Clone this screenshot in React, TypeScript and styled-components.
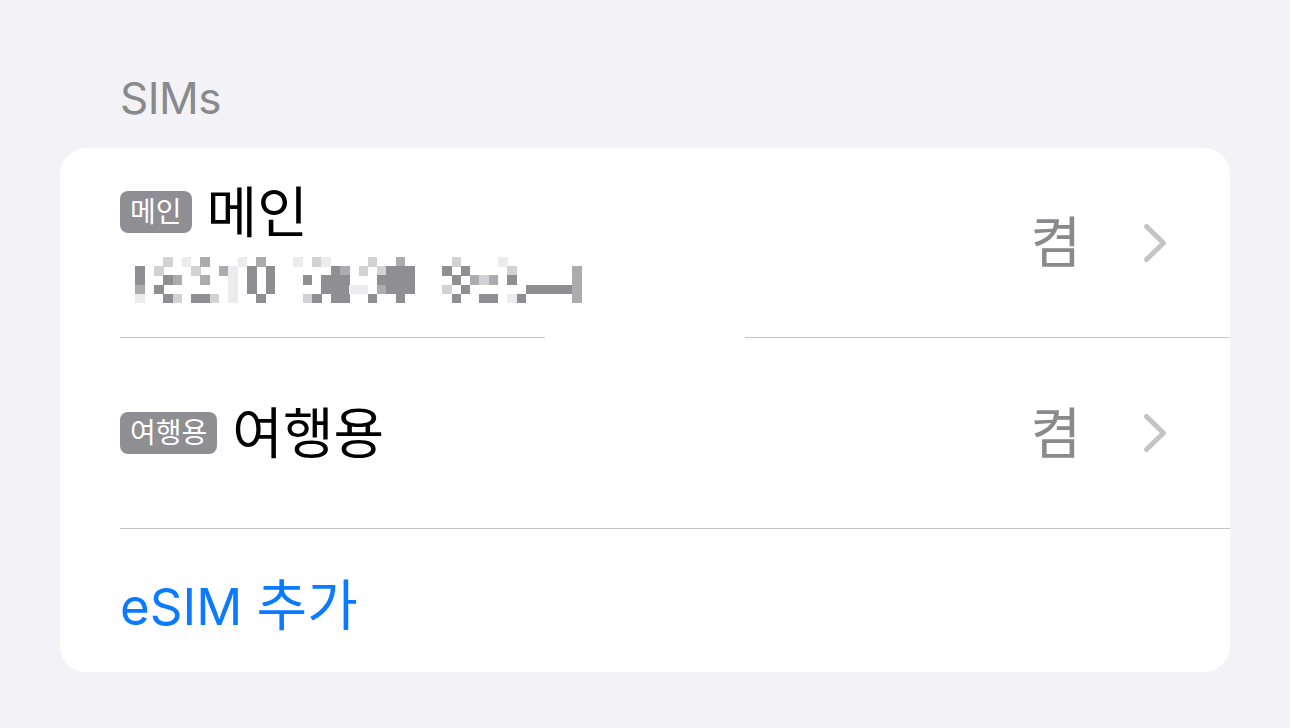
import React from "react";
import styled, { createGlobalStyle } from "styled-components";

const GlobalStyle = createGlobalStyle`
  html, body {
    margin: 0;
    padding: 0;
    background: #f2f2f7;
  }
  body {
    font-family: Inter, "Noto Sans CJK KR", sans-serif;
    -webkit-font-smoothing: antialiased;
  }
`;

const Page = styled.div`
  min-height: 728px;
  padding: 76px 60px 0 60px;
  box-sizing: border-box;
  background: #f2f2f7;
`;

const SectionHeader = styled.div`
  font-size: 44px;
  line-height: 44px;
  color: #8a8a8e;
  padding-left: 60px;
  margin-bottom: 28px;
  letter-spacing: -0.5px;
`;

const Card = styled.div`
  background: #ffffff;
  border-radius: 26px;
  overflow: hidden;
  display: flex;
  flex-direction: column;
`;

const Row = styled.div<{ $h: number }>`
  height: ${(p) => p.$h}px;
  display: flex;
  align-items: center;
  padding: 0 63px 0 60px;
`;

const RowMain = styled.div`
  flex: 1;
  display: flex;
  flex-direction: column;
  gap: 18px;
`;

const TitleLine = styled.div`
  display: flex;
  align-items: center;
  gap: 15px;
  height: 58px;
`;

const Badge = styled.span`
  display: inline-flex;
  align-items: center;
  justify-content: center;
  height: 42px;
  padding: 0 10px;
  border-radius: 8px;
  background: #8e8e93;
  color: #ffffff;
  font-size: 28px;
  line-height: 1;
`;

const Title = styled.span`
  font-size: 55px;
  line-height: 58px;
  color: #000000;
`;

const Value = styled.span`
  font-size: 55px;
  line-height: 1;
  color: #8a8a8e;
  margin-right: 62px;
`;

const Separator = styled.div<{ $gap?: boolean }>`
  height: 1px;
  margin-left: 60px;
  background: ${(p) =>
    p.$gap
      ? "linear-gradient(to right, #c6c6c8 0 425px, transparent 425px 625px, #c6c6c8 625px)"
      : "#c6c6c8"};
`;

const Action = styled.span`
  font-size: 51px;
  line-height: 1;
  color: #0a7aff;
  margin-top: 10px;
`;

const Hangul = styled.span`
  font-size: 55px;
`;

const Chevron = () => (
  <svg width="24" height="40" viewBox="0 0 24 40" style={{ display: "block" }}>
    <polyline
      points="3.5,3.5 20.5,20 3.5,36.5"
      fill="none"
      stroke="#c4c4c7"
      strokeWidth="5"
      strokeLinecap="round"
      strokeLinejoin="round"
    />
  </svg>
);

const SHADES: Record<string, string> = {
  a: "#ececee",
  b: "#d2d2d4",
  c: "#acacb0",
  d: "#8e8e93",
};

// [column, row, shade]
const CELLS: [number, number, string][] = [
  [0, 1, "d"], [0, 2, "d"], [0, 3, "c"], [0, 4, "a"],
  [2, 1, "b"], [2, 3, "d"],
  [3, 0, "b"], [3, 2, "d"], [3, 4, "d"],
  [4, 2, "c"], [4, 4, "b"],
  [5, 0, "a"],
  [6, 1, "b"], [6, 4, "d"],
  [7, 0, "c"], [7, 2, "c"], [7, 4, "d"],
  [8, 4, "b"],
  [9, 1, "c"],
  [10, 1, "a"], [10, 2, "a"], [10, 3, "a"], [10, 4, "a"],
  [11, 0, "a"],
  [12, 1, "d"], [12, 2, "d"], [12, 3, "d"],
  [13, 0, "c"], [13, 4, "d"],
  [14, 1, "d"], [14, 2, "d"], [14, 3, "d"],
  [17, 0, "a"],
  [18, 2, "d"], [18, 4, "b"],
  [19, 0, "b"], [19, 4, "d"],
  [20, 0, "a"], [20, 2, "d"], [20, 3, "d"],
  [21, 1, "d"], [21, 2, "d"], [21, 3, "d"], [21, 4, "d"],
  [22, 1, "c"], [22, 2, "d"], [22, 3, "d"], [22, 4, "d"],
  [23, 3, "a"],
  [24, 1, "b"], [24, 3, "a"],
  [25, 0, "b"], [25, 4, "d"],
  [26, 1, "b"], [26, 2, "d"], [26, 3, "c"],
  [27, 1, "d"], [27, 2, "d"], [27, 3, "d"],
  [28, 0, "c"], [28, 1, "d"], [28, 2, "d"], [28, 3, "d"], [28, 4, "d"],
  [29, 1, "d"], [29, 2, "d"], [29, 3, "d"],
  [33, 1, "d"], [33, 3, "b"],
  [34, 0, "b"], [34, 2, "d"], [34, 4, "d"],
  [35, 1, "d"], [35, 3, "d"],
  [36, 2, "c"],
  [37, 2, "b"], [37, 4, "d"],
  [38, 2, "c"], [38, 4, "d"],
  [39, 0, "a"],
  [40, 1, "b"], [40, 2, "d"], [40, 4, "a"],
  [41, 4, "d"],
  [42, 3, "d"], [43, 3, "d"], [44, 3, "d"], [45, 3, "d"], [46, 3, "d"],
  [47, 1, "c"], [47, 2, "c"], [47, 3, "c"], [47, 4, "c"],
];

const CW = 9.3;
const CH = 9.2;

const Mosaic = () => (
  <svg
    width={Math.ceil(48 * CW)}
    height={Math.ceil(5 * CH)}
    viewBox={`0 0 ${48 * CW} ${5 * CH}`}
    style={{ display: "block", marginLeft: 15, marginTop: -2 }}
    shapeRendering="crispEdges"
  >
    {CELLS.map(([c, r, s], i) => (
      <rect key={i} x={c * CW} y={r * CH} width={CW + 0.3} height={CH + 0.3} fill={SHADES[s]} />
    ))}
  </svg>
);

export default function App() {
  return (
    <>
      <GlobalStyle />
      <Page>
        <SectionHeader>SIMs</SectionHeader>
        <Card>
          <Row $h={189}>
            <RowMain>
              <TitleLine>
                <Badge>메인</Badge>
                <Title>메인</Title>
              </TitleLine>
              <Mosaic />
            </RowMain>
            <Value>켬</Value>
            <Chevron />
          </Row>
          <Separator $gap />
          <Row $h={190}>
            <RowMain>
              <TitleLine>
                <Badge>여행용</Badge>
                <Title>여행용</Title>
              </TitleLine>
            </RowMain>
            <Value>켬</Value>
            <Chevron />
          </Row>
          <Separator />
          <Row $h={143}>
            <Action>
              eSIM <Hangul>추가</Hangul>
            </Action>
          </Row>
        </Card>
      </Page>
    </>
  );
}
